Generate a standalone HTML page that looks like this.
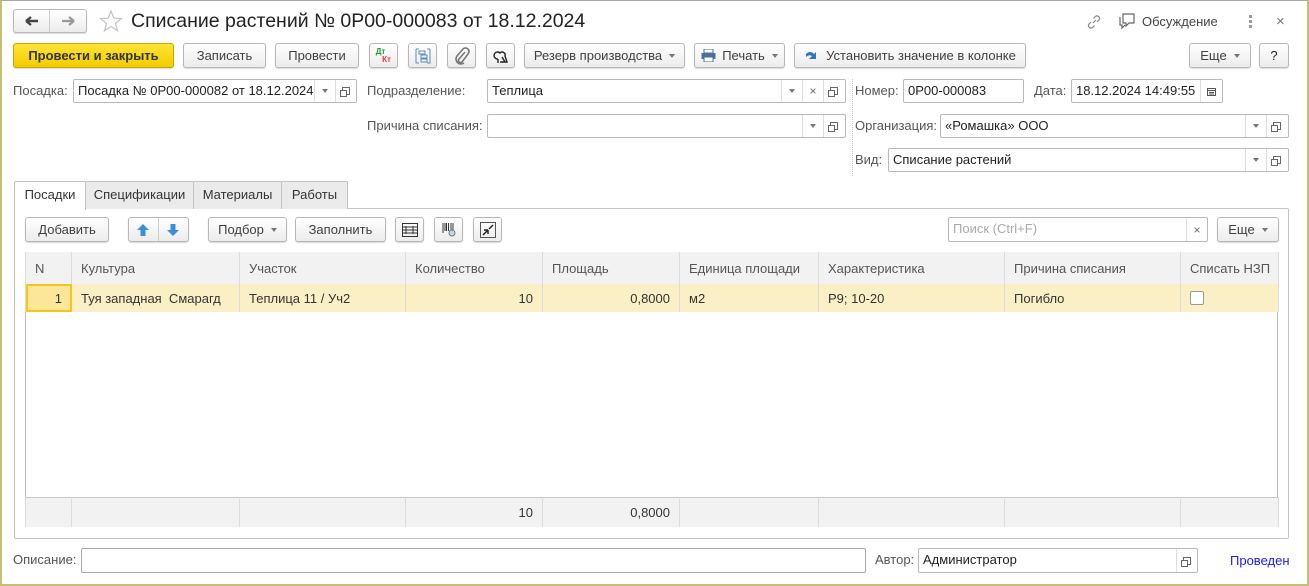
<!DOCTYPE html>
<html><head><meta charset="utf-8">
<style>
*{box-sizing:border-box;margin:0;padding:0}
body{width:1309px;height:586px;overflow:hidden;background:#fff;font-family:"Liberation Sans",Arial,sans-serif;font-size:13px;color:#333;position:relative}
.frame{position:absolute;left:0;top:0;width:1309px;height:586px;border-left:2px solid #c9bd73;border-right:2px solid #c9bd73;border-bottom:2px solid #c9bd73;border-top:1px solid #a8a8a8}
.a{position:absolute}
.btn{position:absolute;height:25px;border:1px solid #b8b8b8;border-radius:3px;background:linear-gradient(#fff,#ececec);box-shadow:0 1px 1px rgba(0,0,0,.15);display:flex;align-items:center;justify-content:center;color:#404040;white-space:nowrap}
.dd::after{content:"";display:inline-block;margin-left:7px;border-left:3px solid transparent;border-right:3px solid transparent;border-top:4px solid #777;vertical-align:middle}
.fld{position:absolute;height:24px;border:1px solid #b9b9b9;border-radius:2px;background:#fff;padding-left:4px;line-height:22px;color:#222;white-space:nowrap;overflow:hidden}
.lbl{position:absolute;color:#555;line-height:24px;white-space:nowrap}
.sub{position:absolute;top:0;height:22px;width:21px;border-left:1px solid #ddd;display:flex;align-items:center;justify-content:center;color:#666;font-size:10px}
.arr{border-left:3px solid transparent;border-right:3px solid transparent;border-top:4px solid #777;width:0;height:0}
.opn{width:8px;height:8px;border:1px solid #666;position:relative}
.opn::before{content:"";position:absolute;left:-3px;top:2px;width:5px;height:5px;border:1px solid #666;background:#fff}
.tab{position:absolute;top:181px;height:28px;border:1px solid #c4c4c4;border-bottom:none;background:#ebebeb;line-height:26px;text-align:center;color:#333;border-radius:2px 2px 0 0}
table{border-collapse:collapse;position:absolute;left:25px;top:252px;width:1253px;table-layout:fixed}
td{border-left:1px solid #dcdcdc;border-right:1px solid #dcdcdc;padding:0 9px;white-space:nowrap;overflow:hidden;color:#333}
</style></head><body>
<div class="frame"></div>

<!-- nav -->
<div class="btn" style="left:13px;top:9px;width:74px;height:24px;justify-content:flex-start;padding:0">
 <div style="width:36px;height:22px;display:flex;align-items:center;justify-content:center;border-right:1px solid #ccc"><svg width="14" height="10"><path d="M1 5H13M1 5L6 1M1 5L6 9" stroke="#444" stroke-width="2.4" fill="none"/></svg></div>
 <div style="width:36px;display:flex;justify-content:center"><svg width="14" height="10"><path d="M1 5H13M13 5L8 1M13 5L8 9" stroke="#999" stroke-width="2.2" fill="none"/></svg></div>
</div>
<svg class="a" style="left:99px;top:10px" width="24" height="22"><path d="M12 1L14.8 8.2L22.5 8.5L16.5 13.3L18.6 20.8L12 16.5L5.4 20.8L7.5 13.3L1.5 8.5L9.2 8.2Z" fill="none" stroke="#c4c4c4" stroke-width="1.2"/></svg>
<div class="a" style="left:131px;top:9px;font-size:19.5px;color:#222;line-height:24px">Списание растений № 0Р00-000083 от 18.12.2024</div>

<svg class="a" style="left:1086px;top:14px" width="16" height="16"><path d="M7 9L10 6M5 8L3 10a2.5 2.5 0 0 0 3.5 3.5L8.5 11.5M11 8L13 6a2.5 2.5 0 0 0-3.5-3.5L7.5 4.5" stroke="#888" fill="none" stroke-width="1.2"/></svg>
<svg class="a" style="left:1119px;top:13px" width="18" height="17"><path d="M4 1H15V10H10L7 13V10H4Z M1 4V12H3V15L6 12" stroke="#666" fill="none" stroke-width="1.2"/></svg>
<div class="a" style="left:1142px;top:14px;color:#444">Обсуждение</div>
<div class="a" style="left:1249px;top:15px;width:3px;font-size:0"><div style="width:3px;height:3px;background:#999;margin-bottom:2px"></div><div style="width:3px;height:3px;background:#999;margin-bottom:2px"></div><div style="width:3px;height:3px;background:#999"></div></div>
<div class="a" style="left:1276px;top:13px;color:#777;font-size:15px">×</div>

<!-- toolbar -->
<div class="btn" style="left:13px;top:43px;width:161px;background:linear-gradient(#ffe436,#f2cc00);border-color:#c9a800;color:#333;font-weight:bold">Провести и закрыть</div>
<div class="btn" style="left:183px;top:43px;width:83px">Записать</div>
<div class="btn" style="left:275px;top:43px;width:84px">Провести</div>
<div class="btn" style="left:369px;top:43px;width:29px;font-size:8px;line-height:8px;flex-direction:column;font-weight:bold"><span style="color:#1a9a3a;margin-left:-6px">Дт</span><span style="color:#e23a3a;margin-left:6px">Кт</span></div>
<div class="btn" style="left:408px;top:43px;width:29px"><svg width="16" height="16"><path d="M1 1H4M1 1V15H4M15 1H12M15 1V15H12" stroke="#5b8cc0" fill="none"/><rect x="4" y="3" width="6" height="3" fill="none" stroke="#5b8cc0"/><rect x="6" y="7" width="6" height="3" fill="none" stroke="#5b8cc0"/><rect x="6" y="11" width="6" height="3" fill="none" stroke="#5b8cc0"/></svg></div>
<div class="btn" style="left:447px;top:43px;width:29px"><svg width="16" height="18"><path d="M11 5L5 12a2 2 0 0 0 3 3L14 7a3.5 3.5 0 0 0-5-5L3 9a5 5 0 0 0 7 7" stroke="#777" fill="none" stroke-width="1.6"/></svg></div>
<div class="btn" style="left:486px;top:43px;width:29px"><svg width="16" height="16"><path d="M5 11a3.5 3.5 0 1 1 2-6a3 3 0 0 1 5 3L14 14H7M5 11V15M9 9L12 14" stroke="#222" fill="none" stroke-width="1.4"/></svg></div>
<div class="btn dd" style="left:524px;top:43px;width:161px">Резерв производства</div>
<div class="btn dd" style="left:694px;top:43px;width:91px"><svg width="15" height="13" style="margin-right:6px"><rect x="3" y="0" width="9" height="4" fill="#fff" stroke="#4a6f99"/><rect x="0.5" y="4" width="14" height="6" fill="#4a6f99"/><rect x="3" y="8" width="9" height="5" fill="#fff" stroke="#4a6f99"/></svg>Печать</div>
<div class="btn" style="left:794px;top:43px;width:232px"><svg width="14" height="14" style="margin-right:8px"><path d="M2 5Q6 1 10 5L12 3V10H5L8 7Q5 5 2 8Z" fill="#2a77c9"/></svg>Установить значение в колонке</div>
<div class="btn dd" style="left:1189px;top:43px;width:62px">Еще</div>
<div class="btn" style="left:1259px;top:43px;width:30px;color:#222">?</div>

<!-- fields -->
<div class="lbl" style="left:13px;top:79px">Посадка:</div>
<div class="fld" style="left:73px;top:79px;width:284px">Посадка № 0Р00-000082 от 18.12.2024<div class="sub" style="left:240px"><div class="arr"></div></div><div class="sub" style="left:261px"><div class="opn"></div></div></div>
<div class="lbl" style="left:367px;top:79px">Подразделение:</div>
<div class="fld" style="left:487px;top:79px;width:359px">Теплица<div class="sub" style="left:293px"><div class="arr"></div></div><div class="sub" style="left:314px;font-size:12px">×</div><div class="sub" style="left:335px"><div class="opn"></div></div></div>
<div class="a" style="left:852px;top:79px;height:97px;border-left:1px dotted #ccc"></div>
<div class="lbl" style="left:855px;top:79px">Номер:</div>
<div class="fld" style="left:903px;top:79px;width:121px">0Р00-000083</div>
<div class="lbl" style="left:1034px;top:79px">Дата:</div>
<div class="fld" style="left:1071px;top:79px;width:152px">18.12.2024 14:49:55<div class="sub" style="left:128px"><svg width="9" height="9"><rect x="0.5" y="1.5" width="8" height="7" fill="none" stroke="#555"/><path d="M1 3.5H8M2 5.5H7M2 7H7" stroke="#555"/></svg></div></div>

<div class="lbl" style="left:367px;top:114px">Причина списания:</div>
<div class="fld" style="left:487px;top:114px;width:359px"><div class="sub" style="left:314px"><div class="arr"></div></div><div class="sub" style="left:335px"><div class="opn"></div></div></div>
<div class="lbl" style="left:855px;top:114px">Организация:</div>
<div class="fld" style="left:940px;top:114px;width:349px">«Ромашка» ООО<div class="sub" style="left:304px"><div class="arr"></div></div><div class="sub" style="left:325px"><div class="opn"></div></div></div>
<div class="lbl" style="left:855px;top:148px">Вид:</div>
<div class="fld" style="left:888px;top:148px;width:401px">Списание растений<div class="sub" style="left:356px"><div class="arr"></div></div><div class="sub" style="left:377px"><div class="opn"></div></div></div>

<!-- tabs -->
<div class="a" style="left:14px;top:208px;width:1275px;height:331px;border:1px solid #c4c4c4;border-radius:0 2px 2px 2px"></div>
<div class="tab" style="left:14px;width:72px;background:#fff;height:29px;z-index:2">Посадки</div>
<div class="tab" style="left:85px;width:109px">Спецификации</div>
<div class="tab" style="left:193px;width:89px">Материалы</div>
<div class="tab" style="left:281px;width:67px">Работы</div>

<div class="btn" style="left:25px;top:217px;width:84px">Добавить</div>
<div class="btn" style="left:128px;top:217px;width:61px;padding:0">
 <div style="width:30px;height:23px;display:flex;align-items:center;justify-content:center;border-right:1px solid #ccc"><svg width="12" height="12"><path d="M6 0L12 6H8.5V12H3.5V6H0Z" fill="#3b8fd6"/></svg></div>
 <div style="width:30px;display:flex;justify-content:center"><svg width="12" height="12"><path d="M6 12L12 6H8.5V0H3.5V6H0Z" fill="#3b8fd6"/></svg></div>
</div>
<div class="btn dd" style="left:208px;top:217px;width:79px">Подбор</div>
<div class="btn" style="left:295px;top:217px;width:91px">Заполнить</div>
<div class="btn" style="left:395px;top:217px;width:29px"><svg width="16" height="14"><rect x="0.5" y="0.5" width="15" height="13" fill="none" stroke="#333"/><path d="M1 4H15M1 7H15M1 10H15" stroke="#333"/><path d="M4 3V11M11 3V11" stroke="#333"/></svg></div>
<div class="btn" style="left:434px;top:217px;width:29px"><svg width="16" height="16"><path d="M2 1V11M4 1V9M5.5 1V9M7.5 1V9M10 1V9M12 1V9" stroke="#333"/><circle cx="11" cy="11" r="3" fill="#bcd8f0" stroke="#777"/></svg></div>
<div class="btn" style="left:473px;top:217px;width:29px"><svg width="16" height="16"><rect x="0.5" y="0.5" width="15" height="15" fill="none" stroke="#555"/><path d="M3 13L8 8M8 8V12M8 8H4M13 3L9 7" stroke="#222" stroke-width="1.5"/></svg></div>

<div class="fld" style="left:948px;top:217px;width:260px;height:25px;color:#aaa">Поиск (Ctrl+F)<div class="sub" style="left:237px;height:23px;font-size:12px">×</div></div>
<div class="btn dd" style="left:1217px;top:217px;width:62px">Еще</div>

<!-- table -->
<div class="a" style="left:25px;top:252px;width:1253px;height:275px;border:1px solid #b9b9b9"></div>
<table>
<colgroup><col style="width:46px"><col style="width:168px"><col style="width:166px"><col style="width:137px"><col style="width:137px"><col style="width:139px"><col style="width:186px"><col style="width:176px"><col style="width:98px"></colgroup>
<tr style="height:32px;background:#f2f2f2;color:#555"><td style="color:#555">N</td><td style="color:#555">Культура</td><td style="color:#555">Участок</td><td style="color:#555">Количество</td><td style="color:#555">Площадь</td><td style="color:#555">Единица площади</td><td style="color:#555">Характеристика</td><td style="color:#555">Причина списания</td><td style="color:#555">Списать НЗП</td></tr>
<tr style="height:28px;background:#fbf0c5"><td style="text-align:right;background:#fce69a;outline:2px solid #f5c518;outline-offset:-2px">1</td><td>Туя западная&nbsp; Смарагд</td><td>Теплица 11 / Уч2</td><td style="text-align:right">10</td><td style="text-align:right">0,8000</td><td>м2</td><td>Р9; 10-20</td><td>Погибло</td><td><div style="width:14px;height:14px;border:1px solid #999;border-radius:2px;background:#fff"></div></td></tr>
<tr style="height:185px"><td style="border:none"></td><td style="border:none"></td><td style="border:none"></td><td style="border:none"></td><td style="border:none"></td><td style="border:none"></td><td style="border:none"></td><td style="border:none"></td><td style="border:none"></td></tr>
<tr style="height:30px;background:#f2f2f2;border-top:1px solid #c8c8c8"><td></td><td></td><td></td><td style="text-align:right">10</td><td style="text-align:right">0,8000</td><td></td><td></td><td></td><td></td></tr>
</table>

<!-- bottom -->
<div class="lbl" style="left:13px;top:548px">Описание:</div>
<div class="fld" style="left:81px;top:548px;width:785px;height:25px;border-color:#a8a8a8"></div>
<div class="lbl" style="left:875px;top:548px">Автор:</div>
<div class="fld" style="left:918px;top:548px;width:280px;height:25px">Администратор<div class="sub" style="left:257px;height:23px"><div class="opn"></div></div></div>
<div class="a" style="left:1230px;top:553px;color:#1a1aff">Проведен</div>
</body></html>
